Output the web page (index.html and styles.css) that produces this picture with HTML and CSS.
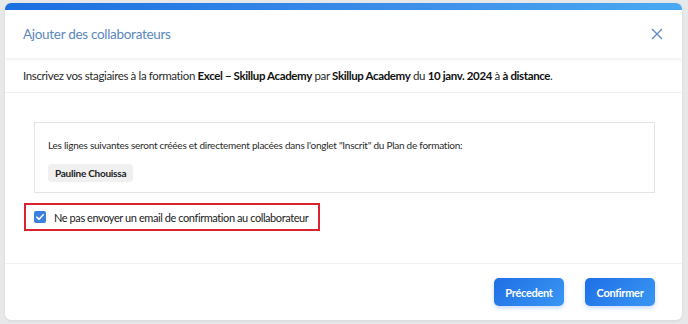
FILE: index.html
```html
<!DOCTYPE html>
<html lang="fr">
<head>
<meta charset="utf-8">
<link rel="stylesheet" href="styles.css">
</head>
<body>
<div class="page">
  <div class="modal">
    <div class="topbar"></div>
    <div class="header">
      <h1 class="title">Ajouter des collaborateurs</h1>
      <svg class="close" width="12" height="12" viewBox="0 0 12 12"><path d="M1 1L11 11M11 1L1 11" stroke="#5e8cc4" stroke-width="1.4" fill="none"/></svg>
    </div>
    <div class="intro">Inscrivez vos stagiaires à la formation <b>Excel – Skillup Academy</b> par <b>Skillup Academy</b> du <b>10 janv. 2024</b> à <b>à distance</b>.</div>
    <div class="body">
      <div class="box">
        <p class="box-text">Les lignes suivantes seront créées et directement placées dans l'onglet "Inscrit" du Plan de formation:</p>
        <div><span class="chip">Pauline Chouissa</span></div>
      </div>
      <label class="check-row">
        <span class="checkbox"><svg width="12" height="12" viewBox="0 0 12 12"><path d="M2.8 6.2L5 8.3L9.3 3.8" stroke="#fff" stroke-width="1.6" fill="none" stroke-linecap="round" stroke-linejoin="round"/></svg></span>
        <span>Ne pas envoyer un email de confirmation au collaborateur</span>
      </label>
    </div>
    <div class="footer">
      <button class="btn">Précedent</button>
      <button class="btn">Confirmer</button>
    </div>
  </div>
</div>
</body>
</html>
```

FILE: styles.css
```css
* { box-sizing: border-box; }
html, body { margin: 0; padding: 0; }
body {
  width: 688px;
  height: 324px;
  overflow: hidden;
  background: #e6e8e9;
  font-family: Lato, "Noto Sans", sans-serif;
  color: #222;
}
.page {
  padding: 3px 6px 0 5px;
  height: 324px;
}
.modal {
  background: #fff;
  border-radius: 6px;
  height: 317px;
  overflow: hidden;
  display: flex;
  flex-direction: column;
  box-shadow: 0 1px 3px rgba(0,0,0,0.08);
}
.topbar {
  height: 7px;
  background: linear-gradient(90deg, #1b6fe0, #3d8fea 60%, #4aa9f2);
  flex: none;
}
.header {
  height: 48px;
  display: flex;
  align-items: center;
  justify-content: space-between;
  padding: 0 19px 0 18px;
  box-shadow: 0 2px 3px rgba(0,0,0,0.06);
  position: relative;
}
.title {
  margin: 0;
  font-size: 13.5px;
  letter-spacing: -0.3px;
  font-weight: 400;
  color: #5b87c1;
}
.close { display: block; }
.intro {
  height: 35px;
  line-height: 35px;
  padding: 0 18px;
  font-size: 11.5px;
  letter-spacing: -0.37px;
  color: #2a2a2a;
  border-bottom: 1px solid #f0f0f0;
  white-space: nowrap;
}
.intro b { color: #111; font-weight: 700; }
.body {
  padding: 29px 27px 0 19px;
  height: 171px;
  border-bottom: 1px solid #f2f2f2;
}
.box {
  margin-left: 10px;
  border: 1px solid #e4e4e4;
  height: 71px;
  padding: 16px 13px 0;
}
.box-text {
  margin: 0 0 9px;
  font-size: 10px;
  line-height: 13px;
  letter-spacing: -0.25px;
  color: #2a2a2a;
}
.chip {
  display: inline-block;
  background: #f0f0f0;
  border-radius: 4px;
  padding: 0 7px;
  height: 18px;
  font-size: 10px;
  letter-spacing: -0.25px;
  font-weight: 700;
  color: #222;
  line-height: 18px;
}
.check-row {
  display: inline-flex;
  align-items: center;
  gap: 8px;
  margin-top: 10px;
  height: 28px;
  padding: 0 10px 0 8px;
  border: 2px solid #d9232e;
  font-size: 11px;
  letter-spacing: -0.42px;
  color: #222;
}
.checkbox {
  width: 12px;
  height: 12px;
  background: #3c7fe0;
  border-radius: 2px;
  display: flex;
  align-items: center;
  justify-content: center;
}
.checkbox svg { display: block; }
.footer {
  flex: 1;
  display: flex;
  justify-content: flex-end;
  align-items: flex-start;
  gap: 21px;
  padding: 14px 27px 0 0;
}
.btn {
  height: 28px;
  width: 70px;
  border: none;
  border-radius: 5px;
  background: linear-gradient(135deg, #1f6fe6, #3a97f2);
  color: #fff;
  font-family: Lato, "Noto Sans", sans-serif;
  font-weight: 700;
  font-size: 11px;
  letter-spacing: -0.3px;
  box-shadow: 0 2px 4px rgba(30,110,230,0.25);
  padding: 0;
}
```
